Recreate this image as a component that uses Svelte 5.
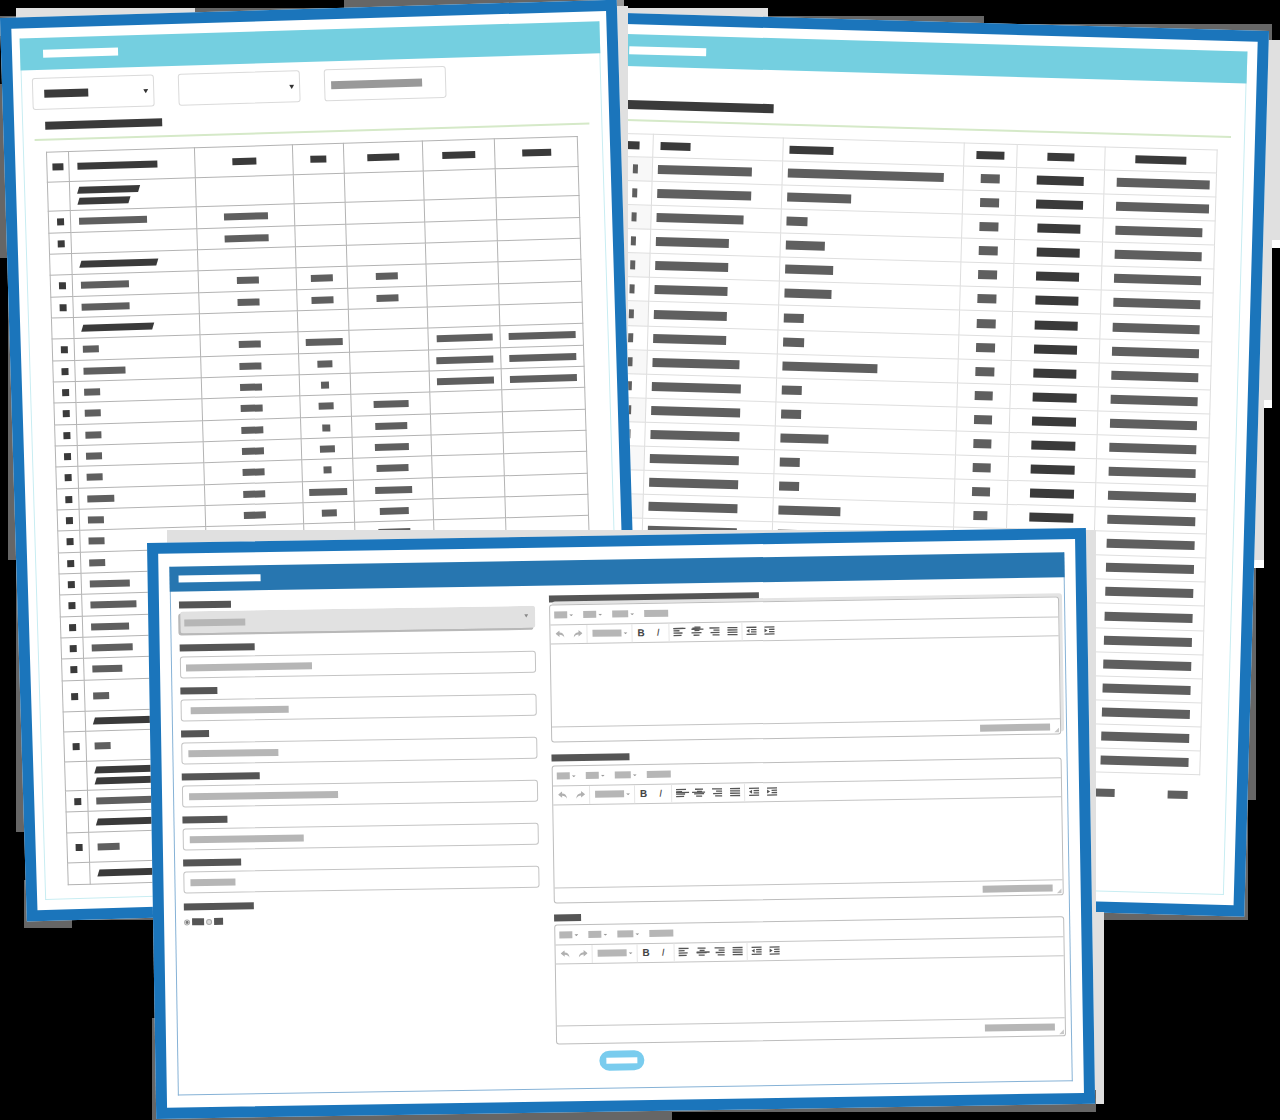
<script>
  const dark = '#3a3a3a';
  const mid = '#5f5f5f';

  // Stepped shadow blocks behind and between the windows: x, y, width, height, tone
  const backShades = [
    [0, 16, 20, 20, 'dim'], [16, 8, 180, 20, 'pale'], [195, 8, 150, 10, 'dim'], [344, 0, 274, 14, 'dim'],
    [617, 0, 7, 8, 'soft'], [627, 8, 141, 24, 'pale'], [768, 16, 216, 16, 'dim'], [984, 24, 288, 16, 'dim'],
    [1262, 40, 18, 200, 'pale'], [1262, 240, 18, 8, 'snow'], [1256, 240, 16, 160, 'pale'], [1258, 400, 14, 8, 'snow'],
    [1250, 400, 14, 160, 'pale'], [1250, 560, 14, 8, 'snow'], [1240, 568, 16, 232, 'dim'], [1230, 800, 18, 120, 'dim'],
    [1104, 896, 144, 24, 'dim'], [0, 84, 8, 174, 'dim'], [8, 260, 20, 300, 'dim'], [16, 552, 20, 280, 'dim'],
    [24, 880, 48, 48, 'dim'], [24, 896, 136, 24, 'dim']
  ];
  const midShades = [[612, 6, 16, 540, 'pale']];
  const frontShades = [
    [167, 530, 929, 20, 'pale'], [1080, 530, 16, 400, 'pale'], [1080, 912, 24, 192, 'pale'],
    [152, 1018, 20, 102, 'dim'], [160, 1100, 512, 20, 'dim'], [672, 1090, 424, 22, 'dim']
  ];

  // Each row: height, marker, first column, remaining columns
  const planCols = [22, 126, 98, 51, 79, 72, 83];
  const planHead = [80, 24, 16, 32, 33, 29];
  const plan = [
    [29, 0, [61, 51], []], [22, 1, 68, [44]], [21, 1, 0, [44]],
    [21, 0, [77], []], [22, 1, 48, [22, 22, 22]], [21, 1, 48, [22, 22, 22]], [21, 0, [71], []],
    [22, 1, 16, [22, 37, 0, 56, 67]], [21, 1, 42, [22, 15, 0, 57, 67]], [21, 1, 16, [22, 8, 0, 57, 67]],
    [22, 1, 16, [22, 15, 35]], [21, 1, 16, [22, 8, 32]], [21, 1, 16, [22, 15, 34]], [22, 1, 16, [22, 8, 32]],
    [21, 1, 27, [22, 38, 37]], [21, 1, 16, [22, 15, 29]], [22, 1, 16, [22, 15, 32]], [21, 1, 16, [22]],
    [21, 1, 40, []], [22, 1, 46, []], [21, 1, 38, []], [21, 1, 41, []], [22, 1, 30, []],
    [31, 1, 16, []], [20, 0, [90], []], [30, 1, 16, []], [29, 0, [90, 90], []],
    [21, 1, 80, []], [21, 0, [90], []], [30, 1, 22, []], [22, 0, [90], []]
  ];

  const logCols = [43, 130, 181, 53, 88, 112];
  const log = [
    [94, 156, 19, 47, 93], [94, 64, 19, 47, 93], [87, 21, 19, 43, 87], [73, 39, 19, 43, 87], [73, 48, 19, 43, 87],
    [73, 47, 19, 43, 87], [73, 20, 19, 43, 87], [73, 21, 19, 43, 87], [87, 95, 19, 43, 87], [89, 20, 18, 44, 87],
    [89, 20, 18, 44, 87], [89, 48, 18, 44, 87], [89, 20, 18, 44, 87], [89, 20, 18, 44, 88], [89, 62, 14, 44, 88],
    ...Array.from({ length: 10 }, () => [89, 30, 18, 44, 88])
  ];

  const fields = [
    { id: 'name', label: 75, value: 126, pad: 5 },
    { id: 'code', label: 37, value: 98, pad: 9 },
    { id: 'type', label: 28, value: 90, pad: 6 },
    { id: 'contact', label: 78, value: 149, pad: 6 },
    { id: 'place', label: 45, value: 114, pad: 6 },
    { id: 'period', label: 58, value: 45, pad: 6 }
  ];

  const editors = [
    { id: 'summary', label: 210, cls: 'first', stray: ['M0 1H12', 'M3 0H9M0 2H12'] },
    { id: 'details', label: 78, cls: 'second', stray: ['M0 4H13', 'M-2 4H11'] },
    { id: 'notes', label: 27, cls: 'third', stray: ['', 'M0 5H13'] }
  ];
  const aligns = [
    'M0 1H10M0 3.3H6M0 5.6H9M0 8H8',
    'M1 1H9M3 3.3H8M0 5.6H10M2 8H8',
    'M0 1H10M4 3.3H10M1 5.6H10M3 8H10',
    'M0 1H10M0 3.3H10M0 5.6H10M0 8H10'
  ];
</script>

{#snippet shades(list)}
  <svg class="shades" aria-hidden="true">
    {#each list as [x, y, w, h, tone]}
      <rect {x} {y} width={w} height={h} class={tone} />
    {/each}
  </svg>
{/snippet}

{#snippet bar(w, color)}
  {#if w}<span class="bar" style="width:{w}px;background:{color}"></span>{/if}
{/snippet}

<main class="desk">
  {@render shades(backShades)}

  <section class="window log">
    <div class="panel">
      <header class="band">{@render bar(77, '#fff')}</header>
      <div class="log-title">{@render bar(146, dark)}</div>
      <div class="rule"></div>
      <table>
        <colgroup>{#each logCols as w}<col style="width:{w}px" />{/each}</colgroup>
        <thead>
          <tr>
            {#each [14, 30, 44, 28, 27, 51] as w}<th>{@render bar(w, dark)}</th>{/each}
          </tr>
        </thead>
        <tbody>
          {#each log as row, i}
            <tr style="height:{i % 12 === 6 ? 25 : 24}px">
              <td>{@render bar(5, mid)}</td>
              {#each row as w, c}<td>{@render bar(w, c === 3 ? dark : mid)}</td>{/each}
            </tr>
          {/each}
        </tbody>
      </table>
      <footer class="pager">{@render bar(19, mid)}{@render bar(20, mid)}</footer>
    </div>
  </section>

  {@render shades(midShades)}

  <section class="window plan">
    <div class="panel">
      <header class="band">{@render bar(75, '#fff')}</header>
      <div class="filters">
        <div class="pick">
          <select class="filled" aria-label="Group"></select>
          <svg viewBox="0 0 6 5" aria-hidden="true"><path d="M0 0H6L3 5Z" /></svg>
        </div>
        <div class="pick">
          <select aria-label="Period"></select>
          <svg viewBox="0 0 6 5" aria-hidden="true"><path d="M0 0H6L3 5Z" /></svg>
        </div>
        <div class="pick">
          <input type="text" aria-label="Search" />
        </div>
      </div>
      <div class="plan-title">{@render bar(117, dark)}</div>
      <div class="rule"></div>
      <table>
        <colgroup>{#each planCols as w}<col style="width:{w}px" />{/each}</colgroup>
        <thead>
          <tr>
            <th>{@render bar(11, dark)}</th>
            {#each planHead as w}<th>{@render bar(w, dark)}</th>{/each}
          </tr>
        </thead>
        <tbody>
          {#each plan as [h, marker, first, rest]}
            <tr style="height:{h}px">
              <td>{@render bar(marker ? 7 : 0, dark)}</td>
              <td>
                {#if Array.isArray(first)}
                  <div class="slanted">{#each first as w}{@render bar(w, dark)}{/each}</div>
                {:else}
                  {@render bar(first, mid)}
                {/if}
              </td>
              {#each [0, 1, 2, 3, 4] as c}<td>{@render bar(rest[c], mid)}</td>{/each}
            </tr>
          {/each}
        </tbody>
      </table>
    </div>
  </section>

  {@render shades(frontShades)}

  <section class="window entry">
    <form class="panel" onsubmit={(e) => e.preventDefault()}>
      <header class="band">{@render bar(82, '#fff')}</header>
      <div class="columns">
        <div class="fields">
          <div class="field">
            <label for="category">{@render bar(52, '#555')}</label>
            <div class="pick raised">
              <select id="category"></select>
              <svg viewBox="0 0 6 5" aria-hidden="true"><path d="M0 0H6L3 5Z" /></svg>
            </div>
          </div>
          {#each fields as f}
            <div class="field">
              <label for={f.id}>{@render bar(f.label, '#555')}</label>
              <input id={f.id} type="text" style="--w:{f.value}px;--x:{f.pad}px" />
            </div>
          {/each}
          <fieldset>
            <legend>{@render bar(70, '#555')}</legend>
            <div class="choices">
              <input type="radio" name="choice" id="yes" checked /><label for="yes">{@render bar(12, '#555')}</label>
              <input type="radio" name="choice" id="no" /><label for="no">{@render bar(9, '#555')}</label>
            </div>
          </fieldset>
        </div>

        <div class="editors">
          {#each editors as e}
            <label for={e.id}>{@render bar(e.label, '#555')}</label>
            <div class="editor {e.cls}">
              <div class="menus">
                {#each [13, 13, 16, 24] as w, i}
                  <button type="button" aria-label="Menu {i + 1}">
                    {@render bar(w, '#b6b6b6')}
                    {#if i < 3}<svg class="caret" viewBox="0 0 4 2"><path d="M0 0H4L2 2Z" /></svg>{/if}
                  </button>
                {/each}
              </div>
              <div class="tools">
                <div class="group">
                  <button type="button" aria-label="Undo"><svg class="arrow" viewBox="0 0 9 8"><path d="M0 3.2L4 0V2.2C7 2.3 8.5 4 9 7.5C7.5 5.2 6.3 4.4 4 4.4V6.5Z" /></svg></button>
                  <button type="button" aria-label="Redo"><svg class="arrow" viewBox="0 0 9 8"><path d="M9 3.2L5 0V2.2C2 2.3 .5 4 0 7.5C1.5 5.2 2.7 4.4 5 4.4V6.5Z" /></svg></button>
                </div>
                <div class="group style">
                  <button type="button" aria-label="Style">
                    {@render bar(29, '#b6b6b6')}
                    <svg class="caret" viewBox="0 0 4 2"><path d="M0 0H4L2 2Z" /></svg>
                  </button>
                </div>
                <div class="group marks">
                  <button type="button" class="bold">B</button>
                  <button type="button" class="italic">I</button>
                </div>
                <div class="group">
                  {#each aligns as d, i}
                    <button type="button" aria-label="Align {i + 1}">
                      <svg class="lines" viewBox="0 0 10 9"><path {d} />{#if e.stray[i]}<path d={e.stray[i]} />{/if}</svg>
                    </button>
                  {/each}
                </div>
                <div class="group">
                  <button type="button" aria-label="Outdent"><svg class="lines" viewBox="0 0 10 9"><path d="M0 1H10M4.5 3.3H10M4.5 5.6H10M0 8H10" /><path class="tip" d="M0 4.5L3 2.5V6.5Z" /></svg></button>
                  <button type="button" aria-label="Indent"><svg class="lines" viewBox="0 0 10 9"><path d="M0 1H10M4.5 3.3H10M4.5 5.6H10M0 8H10" /><path class="tip" d="M3 4.5L0 2.5V6.5Z" /></svg></button>
                </div>
              </div>
              <textarea id={e.id}></textarea>
              <div class="status">
                {@render bar(70, '#b6b6b6')}
                <svg viewBox="0 0 5 5" aria-hidden="true"><path d="M5 0V5H0Z" /></svg>
              </div>
            </div>
          {/each}
          <button type="submit" class="send" aria-label="Submit">{@render bar(31, '#fff')}</button>
        </div>
      </div>
    </form>
  </section>
</main>

<style>
  :global(body) { margin: 0; background: #000; }
  * { box-sizing: border-box; }
  .desk {
    position: relative;
    min-height: 100vh;
    overflow: hidden;
    font: 10px/12px "Liberation Sans", sans-serif;
    color: #444;
  }
  .shades { position: absolute; inset: 0; width: 100%; height: 100%; }
  .dim { fill: #666; }
  .soft { fill: #999; }
  .pale { fill: #e0e0e0; }
  .snow { fill: #fff; }

  .window {
    position: absolute;
    background: #fff;
    border: 11px solid #1b75bb;
  }
  .plan { left: 0; top: 18px; width: 617px; padding: 10px 7px 10px 8px; transform: rotate(-1.7deg); transform-origin: 0 0; }
  .log { left: 589px; top: 31px; width: 680px; padding: 10px; transform: rotate(1.6deg); transform-origin: 100% 0; }
  .entry { left: 147px; top: 543px; width: 939px; padding: 13px 11px 12px; transform: rotate(-0.92deg); transform-origin: 0 0; }

  .panel { border: 1px solid #c8edf2; border-top: 0; }
  .band {
    display: flex;
    align-items: flex-start;
    height: 32px;
    margin: 0 -1px;
    padding: 12px 23px;
    background: #74cfe0;
  }
  .bar { display: block; height: 8px; flex: none; }
  .rule { height: 2px; background: #d5e9c8; }

  table { border-collapse: collapse; table-layout: fixed; line-height: 0; }
  th, td { padding: 0; border: 1px solid #b3b3b3; vertical-align: middle; }
  td .bar, th .bar { margin: 0 auto; }

  .plan .panel { padding-bottom: 13px; }
  .filters { display: flex; gap: 24px; padding: 8px 10px 0; }
  .pick { position: relative; width: 122px; }
  select, input[type="text"] {
    appearance: none;
    display: block;
    width: 100%;
    height: 32px;
    margin: 0;
    border: 1px solid #dadada;
    border-radius: 3px;
    background: #fff;
    outline: 0;
  }
  .filters .filled { background: linear-gradient(#3a3a3a, #3a3a3a) 11px center / 44px 8px no-repeat #fff; }
  .filters input[type="text"] { background: linear-gradient(#999, #999) 6px center / 91px 8px no-repeat #fff; }
  .pick svg { position: absolute; right: 6px; top: 14px; width: 5px; height: 5px; fill: #333; }
  .plan-title { padding: 12px 0 9px 22px; }
  .plan .rule { margin: 0 12px 11px 11px; }
  .plan table { width: 531px; margin-left: 22px; }
  .plan thead tr { height: 30px; }
  .plan td .bar { height: 7px; }
  .plan td:first-child .bar { margin-right: 6px; }
  .plan th:nth-child(2) .bar, .plan td:nth-child(2) .bar { margin-left: 8px; }
  .plan th .bar { height: 7px; }
  .slanted { display: grid; gap: 4px; }
  .slanted .bar { transform: skewX(-18deg); }

  .log .panel { padding-bottom: 94px; }
  .log .band { padding-left: 20px; }
  .log-title { padding: 34px 0 10px 19px; }
  .log-title .bar { height: 9px; }
  .log .rule { margin: 0 13px 12px 18px; }
  .log table { width: 607px; margin-left: 2px; }
  .log thead tr { height: 23px; }
  .log th, .log td { border-color: #dedede; }
  .log td .bar { height: 9px; }
  .log tbody tr:nth-child(odd) td:first-child { background: #f8f8f8; }
  .log th:first-child .bar { margin-right: 13px; }
  .log td:first-child .bar { margin-right: 14px; }
  .log th:nth-child(2) .bar { margin-left: 7px; }
  .log th:nth-child(3) .bar { margin-left: 6px; }
  .log td:nth-child(2) .bar { margin-left: 5px; }
  .log td:nth-child(3) .bar { margin-left: 5px; }
  .log td:nth-child(6) .bar { margin-left: 12px; }
  .pager { display: flex; justify-content: flex-end; gap: 53px; padding: 16px 38px 0 0; }

  .entry .panel { border-color: #86b2d6; padding-bottom: 17px; }
  .entry .band { height: 25px; padding: 9px; background: #2776b0; }
  .entry .bar { height: 7px; }
  .columns { display: grid; grid-template-columns: 354px 510px; justify-content: space-between; padding: 10px 5px 0 8px; }
  .fields { display: grid; gap: 9px; align-content: start; }
  .field { display: grid; gap: 4px; height: 34px; }
  .field label { height: 8px; }
  .entry input[type="text"] {
    height: 22px;
    border-color: #c4c4c4;
    background: linear-gradient(#b6b6b6, #b6b6b6) var(--x) center / var(--w) 7px no-repeat #fff;
  }
  .raised { width: 355px; height: 22px; margin: -4px 0 0 1px; }
  .raised select {
    height: 22px;
    border: 0;
    background: linear-gradient(#b6b6b6, #b6b6b6) 4px center / 61px 7px no-repeat #e1e1e1;
    box-shadow: -2px 2px #b8b8b8;
  }
  .raised svg { top: 8px; right: 7px; width: 4px; height: 4px; fill: #888; }
  fieldset { min-width: 0; margin: 1px 0 0; padding: 0; border: 0; }
  legend { display: block; padding: 0; }
  .choices { display: flex; align-items: center; gap: 2px; margin-top: 8px; }
  .choices input {
    appearance: none;
    width: 6px;
    height: 6px;
    margin: 0;
    border: 1px solid #aaa;
    border-radius: 50%;
    background: #ddd;
  }
  .choices input:checked { background: radial-gradient(#777 1px, #eee 2px); }

  .editors { display: flex; flex-direction: column; }
  .editors > label { height: 9px; }
  .editor {
    display: flex;
    flex-direction: column;
    height: 138px;
    border: 1px solid #bdbdbd;
    border-radius: 3px;
  }
  .first { margin-bottom: 12px; box-shadow: 3px -3px #e4e4e4; }
  .second { margin: 2px 0 11px; }
  .third { height: 120px; margin: 1px 0 7px; }
  .editor button {
    display: flex;
    align-items: center;
    justify-content: center;
    gap: 2px;
    padding: 0;
    border: 0;
    background: none;
    font: inherit;
    color: inherit;
  }
  .menus { display: flex; align-items: center; gap: 10px; height: 20px; padding-left: 4px; border-bottom: 1px solid #c4c4c4; }
  .tools { display: flex; height: 19px; border-bottom: 1px solid #c4c4c4; }
  .group { display: flex; }
  .group + .group { border-left: 1px solid #e6e6e6; }
  .group button { width: 18px; height: 17px; }
  .group.style button { width: 44px; }
  .group.marks { padding-right: 2px; }
  .group.marks button { width: 17px; }
  .caret { width: 4px; height: 2px; fill: #999; }
  .arrow { width: 9px; height: 8px; fill: #b0b0b0; }
  .lines { width: 10px; height: 9px; overflow: visible; fill: none; stroke: #555; stroke-width: 1.3; }
  .lines .tip { fill: #555; stroke: none; }
  .editor .bold { font-weight: bold; }
  .editor .italic { font-style: italic; }
  textarea { flex: 1; width: 100%; min-height: 0; padding: 4px; border: 0; background: none; resize: none; outline: 0; }
  .status { display: flex; justify-content: flex-end; align-items: center; gap: 4px; height: 15px; padding-right: 1px; border-top: 1px solid #c4c4c4; }
  .status svg { width: 5px; height: 5px; align-self: flex-end; margin-bottom: 1px; fill: #c8c8c8; }
  .third .status { height: 18px; }
  .send {
    display: grid;
    place-items: center;
    width: 45px;
    height: 20px;
    margin-left: 43px;
    padding: 0;
    border: 0;
    border-radius: 10px;
    background: #79ccee;
  }
  .send .bar { height: 6px; }
</style>
